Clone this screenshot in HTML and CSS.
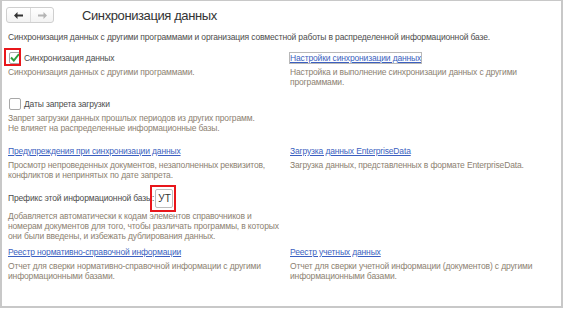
FILE: index.html
```html
<!DOCTYPE html>
<html lang="ru">
<head>
  <meta charset="UTF-8">
  <title>Синхронизация данных</title>
  <link rel="stylesheet" href="styles.css">
</head>
<body>
  <div class="window">
    <div class="topbar">
      <div class="navgroup">
        <button class="navbtn">
          <svg width="9" height="7" viewBox="0 0 9 7"><path d="M0 3.5 L3.5 0 L3.5 2.5 L9 2.5 L9 4.5 L3.5 4.5 L3.5 7 Z" fill="#333"/></svg>
        </button>
        <button class="navbtn">
          <svg width="9" height="7" viewBox="0 0 9 7"><path d="M9 3.5 L5.5 0 L5.5 2.5 L0 2.5 L0 4.5 L5.5 4.5 L5.5 7 Z" fill="#b4b4b4"/></svg>
        </button>
      </div>
      <h1 class="title">Синхронизация данных</h1>
    </div>

    <p class="intro">Синхронизация данных с другими программами и организация совместной работы в распределенной информационной базе.</p>

    <div class="grid">
      <div class="cell">
        <label class="check">
          <span class="box checked">
            <svg width="10" height="9" viewBox="0 0 10 9"><path d="M1 4.5 L3.8 7.5 L9 1" fill="none" stroke="#2e9e3e" stroke-width="2"/></svg>
            <span class="mark"></span>
          </span>
          Синхронизация данных
        </label>
        <p class="desc">Синхронизация данных с другими программами.</p>
      </div>
      <div class="cell">
        <a class="link focused">Настройки синхронизации данных</a>
        <p class="desc">Настройка и выполнение синхронизации данных с другими<br>программами.</p>
      </div>

      <div class="cell">
        <label class="check">
          <span class="box"></span>
          Даты запрета загрузки
        </label>
        <p class="desc">Запрет загрузки данных прошлых периодов из других программ.<br>Не влияет на распределенные информационные базы.</p>
      </div>
      <div class="cell"></div>

      <div class="cell">
        <a class="link">Предупреждения при синхронизации данных</a>
        <p class="desc">Просмотр непроведенных документов, незаполненных реквизитов,<br>конфликтов и непринятых по дате запрета.</p>
      </div>
      <div class="cell">
        <a class="link">Загрузка данных EnterpriseData</a>
        <p class="desc">Загрузка данных, представленных в формате EnterpriseData.</p>
      </div>

      <div class="cell">
        <div class="prefix">
          <span>Префикс этой информационной базы:</span>
          <span class="field">УТ<span class="mark"></span></span>
        </div>
        <p class="desc">Добавляется автоматически к кодам элементов справочников и<br>номерам документов для того, чтобы различать программы, в которых<br>они были введены, и избежать дублирования данных.</p>
      </div>
      <div class="cell"></div>

      <div class="cell">
        <a class="link">Реестр нормативно-справочной информации</a>
        <p class="desc">Отчет для сверки нормативно-справочной информации с другими<br>информационными базами.</p>
      </div>
      <div class="cell">
        <a class="link">Реестр учетных данных</a>
        <p class="desc">Отчет для сверки учетной информации (документов) с другими<br>информационными базами.</p>
      </div>
    </div>
  </div>
</body>
</html>
```

FILE: styles.css
```css
body {
  margin: 0;
  background-color: #fff;
  font-family: "Liberation Sans", Arial, sans-serif;
  font-size: 8.5px;
  letter-spacing: -0.15px;
  color: #4d4d4d;
}
.window {
  width: 563px;
  height: 308px;
  box-sizing: border-box;
  border: 1px solid #c8c8c8;
  border-width: 1px 2px 2px 2px;
  padding: 6px 0 0 4px;
}
.topbar {
  display: flex;
  align-items: center;
  height: 16px;
}
.navgroup {
  display: flex;
  border: 1px solid #cfcfcf;
  border-radius: 3px;
  height: 16px;
  box-sizing: border-box;
  background: linear-gradient(#fff, #f3f3f3);
}
.navbtn {
  width: 23px;
  height: 14px;
  border: none;
  background: none;
  padding: 0;
  display: flex;
  align-items: center;
  justify-content: center;
}
.navbtn + .navbtn {
  border-left: 1px solid #dcdcdc;
}
.title {
  margin: 0 0 0 28px;
  font-size: 13px;
  letter-spacing: -0.4px;
  font-weight: normal;
  color: #333;
}
.intro {
  margin: 9px 0 0 2px;
  line-height: 11px;
}
.grid {
  display: grid;
  grid-template-columns: 282px 1fr;
  grid-template-rows: 46px 47px 43px 58px 40px;
  margin-top: 9px;
  margin-left: 2px;
}
.cell {
  position: relative;
}
.check {
  display: flex;
  align-items: center;
  height: 12px;
  line-height: 12px;
}
.box {
  position: relative;
  width: 10px;
  height: 10px;
  border: 1px solid #a8a8a8;
  border-radius: 2px;
  margin: 0 3px 0 1px;
  background: #fff;
  display: flex;
  align-items: center;
  justify-content: center;
}
.box svg {
  margin-top: -1px;
}
.mark {
  position: absolute;
  border: 2px solid #e8161b;
}
.box .mark {
  left: -6px;
  top: -5px;
  width: 13px;
  height: 14px;
}
.link {
  display: inline-block;
  color: #3b5fc0;
  text-decoration: underline;
  line-height: 12px;
  height: 12px;
}
.focused {
  outline: 1px solid #b8b8b8;
  outline-offset: -1px;
  padding: 0 1px;
  margin-left: -1px;
}
.desc {
  margin: 3px 0 0;
  line-height: 10px;
  white-space: nowrap;
  color: #8c8171;
}
.prefix {
  display: flex;
  align-items: center;
  height: 20px;
}
.field {
  position: relative;
  margin-left: 1px;
  width: 18px;
  height: 19px;
  box-sizing: border-box;
  border: 1px solid #bdbdbd;
  border-radius: 2px;
  padding-left: 2px;
  line-height: 17px;
  font-size: 10px;
  letter-spacing: 0;
  color: #333;
}
.field .mark {
  left: -6px;
  top: -5px;
  width: 22px;
  height: 23px;
}
```
